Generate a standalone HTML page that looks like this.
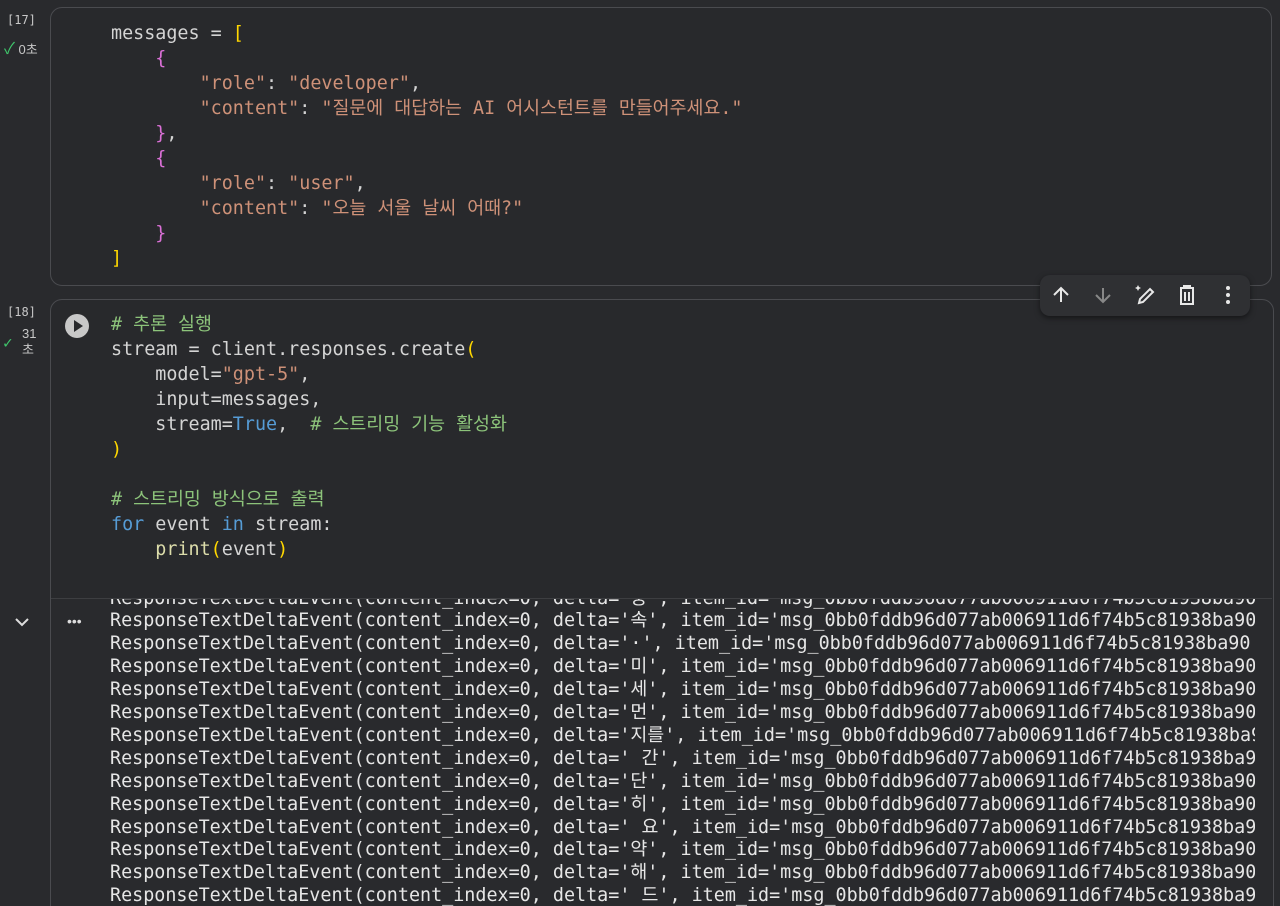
<!DOCTYPE html>
<html style="height:906px;overflow:hidden"><head><meta charset="utf-8"><style>
body{margin:0;width:1280px;height:906px;background:#292a2d;overflow:hidden;position:relative;font-family:"DejaVu Sans Mono","Liberation Mono","Noto Sans CJK KR",monospace;}
.cell{position:absolute;border:1px solid #4a4b4f;border-radius:12px;background:#28292c;}
.code{position:absolute;left:111px;font-size:18.4px;line-height:25px;color:#d4d4d4;white-space:pre;}
.s{color:#ce9178}.b{color:#ffd700}.p{color:#da70d6}.c{color:#8cc37a}.k{color:#569cd6}.f{color:#dcdcaa}
.num{position:absolute;font-family:"DejaVu Sans Mono",monospace;font-size:12px;color:#c8c8c8;}
.out{position:absolute;left:110px;top:599px;width:1145px;height:307px;overflow:hidden;font-size:18.4px;line-height:22.9px;color:#e6e6e6;white-space:pre;}
.tb{position:absolute;left:1040px;top:275px;width:210px;height:41px;background:#2f3033;border-radius:10px;box-shadow:0 2px 6px rgba(0,0,0,.5);}
</style></head><body>
<div class="num" style="left:7px;top:13px">[17]</div>
<div class="num" style="left:4px;top:35px;font-family:'Liberation Sans','Noto Sans CJK KR',sans-serif;font-size:13px"><span style="color:#3fc56b;font-size:16px">✓</span> 0초</div>
<div class="cell" style="left:50px;top:7px;width:1220px;height:277px"></div>
<div class="code" style="top:21px">messages = <span class="b">[</span>
    <span class="p">{</span>
        <span class="s">"role"</span>: <span class="s">"developer"</span>,
        <span class="s">"content"</span>: <span class="s">"질문에 대답하는 AI 어시스턴트를 만들어주세요."</span>
    <span class="p">}</span>,
    <span class="p">{</span>
        <span class="s">"role"</span>: <span class="s">"user"</span>,
        <span class="s">"content"</span>: <span class="s">"오늘 서울 날씨 어때?"</span>
    <span class="p">}</span>
<span class="b">]</span></div>

<div class="num" style="left:7px;top:305px">[18]</div>
<div class="num" style="left:22px;top:326px;font-family:'Liberation Sans','Noto Sans CJK KR',sans-serif;line-height:16px;font-size:13px">31<br>초</div>
<div style="position:absolute;left:3px;top:333px;color:#3fc56b;font-size:16px">✓</div>
<div class="cell" style="left:50px;top:299px;width:1222px;height:620px;border-radius:12px 12px 0 0"></div>
<div style="position:absolute;left:51px;top:598px;width:1221px;height:1px;background:#3d3e41"></div>
<div style="position:absolute;left:51px;top:599px;width:1221px;height:307px;background:#292a2d"></div>
<div style="position:absolute;left:65px;top:314px;width:24px;height:24px;border-radius:50%;background:#c8c8c8"></div>
<div style="position:absolute;left:74px;top:320px;width:0;height:0;border-left:9px solid #28292c;border-top:6px solid transparent;border-bottom:6px solid transparent"></div>
<div class="code" style="top:312px"><span class="c"># 추론 실행</span>
stream = client.responses.create<span class="b">(</span>
    model=<span class="s">"gpt-5"</span>,
    input=messages,
    stream=<span class="k">True</span>,  <span class="c"># 스트리밍 기능 활성화</span>
<span class="b">)</span>

<span class="c"># 스트리밍 방식으로 출력</span>
<span class="k">for</span> event <span class="k">in</span> stream:
    <span class="f">print</span><span class="b">(</span>event<span class="b">)</span></div>

<svg style="position:absolute;left:14px;top:616px" width="16" height="12" viewBox="0 0 16 12"><path d="M2 3l6 6 6-6" stroke="#ddd" stroke-width="2" fill="none"/></svg>
<div style="position:absolute;left:67px;top:613px;color:#ddd;font-size:14px;font-family:'Liberation Sans',sans-serif">•••</div>
<div class="out"><div style="margin-top:-11.5px">ResponseTextDeltaEvent(content_index=0, delta='중', item_id='msg_0bb0fddb96d077ab006911d6f74b5c81938ba90
ResponseTextDeltaEvent(content_index=0, delta='속', item_id='msg_0bb0fddb96d077ab006911d6f74b5c81938ba90
ResponseTextDeltaEvent(content_index=0, delta='·', item_id='msg_0bb0fddb96d077ab006911d6f74b5c81938ba90'
ResponseTextDeltaEvent(content_index=0, delta='미', item_id='msg_0bb0fddb96d077ab006911d6f74b5c81938ba90
ResponseTextDeltaEvent(content_index=0, delta='세', item_id='msg_0bb0fddb96d077ab006911d6f74b5c81938ba90
ResponseTextDeltaEvent(content_index=0, delta='먼', item_id='msg_0bb0fddb96d077ab006911d6f74b5c81938ba90
ResponseTextDeltaEvent(content_index=0, delta='지를', item_id='msg_0bb0fddb96d077ab006911d6f74b5c81938ba9
ResponseTextDeltaEvent(content_index=0, delta=' 간', item_id='msg_0bb0fddb96d077ab006911d6f74b5c81938ba9
ResponseTextDeltaEvent(content_index=0, delta='단', item_id='msg_0bb0fddb96d077ab006911d6f74b5c81938ba90
ResponseTextDeltaEvent(content_index=0, delta='히', item_id='msg_0bb0fddb96d077ab006911d6f74b5c81938ba90
ResponseTextDeltaEvent(content_index=0, delta=' 요', item_id='msg_0bb0fddb96d077ab006911d6f74b5c81938ba9
ResponseTextDeltaEvent(content_index=0, delta='약', item_id='msg_0bb0fddb96d077ab006911d6f74b5c81938ba90
ResponseTextDeltaEvent(content_index=0, delta='해', item_id='msg_0bb0fddb96d077ab006911d6f74b5c81938ba90
ResponseTextDeltaEvent(content_index=0, delta=' 드', item_id='msg_0bb0fddb96d077ab006911d6f74b5c81938ba9
ResponseTextDeltaEvent(content_index=0, delta='릴', item_id='msg_0bb0fddb96d077ab006911d6f74b5c81938ba90</div></div>

<div class="tb">
<svg style="position:absolute;left:11px;top:10px" width="20" height="20" viewBox="0 0 20 20"><path d="M10 17V3M3 10l7-7 7 7" stroke="#e8e8e8" stroke-width="2" fill="none"/></svg>
<svg style="position:absolute;left:53px;top:10px" width="20" height="20" viewBox="0 0 20 20"><path d="M10 3v14M3 10l7 7 7-7" stroke="#888" stroke-width="2" fill="none"/></svg>
<svg style="position:absolute;left:93px;top:8px" width="24" height="24" viewBox="0 0 24 24"><path d="M6 20l1-4 10-10 3 3-10 10z" stroke="#e8e8e8" stroke-width="2" fill="none"/><path d="M5 2l1 2 2 1-2 1-1 2-1-2-2-1 2-1z" fill="#e8e8e8"/></svg>
<svg style="position:absolute;left:137px;top:9px" width="20" height="22" viewBox="0 0 20 22"><path d="M3 4h14M7 4V2h6v2M4 4v16h12V4M8 8v9M12 8v9" stroke="#e8e8e8" stroke-width="2" fill="none"/></svg>
<svg style="position:absolute;left:184px;top:10px" width="8" height="22" viewBox="0 0 8 22"><circle cx="4" cy="3" r="2" fill="#e8e8e8"/><circle cx="4" cy="10" r="2" fill="#e8e8e8"/><circle cx="4" cy="17" r="2" fill="#e8e8e8"/></svg>
</div>
</body></html>
